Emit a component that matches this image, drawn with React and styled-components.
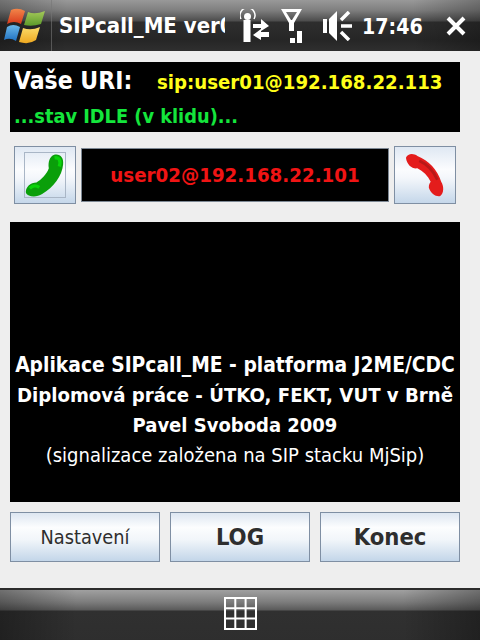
import React from 'react'
import styled, { createGlobalStyle } from 'styled-components'

const Global = createGlobalStyle`
  html, body { margin: 0; padding: 0; background: #eeeeee; }
  * { box-sizing: border-box; }
`

const Screen = styled.div`
  width: 480px;
  height: 640px;
  display: flex;
  flex-direction: column;
  overflow: hidden;
  background: #eeeeee;
  font-family: "DejaVu Sans Condensed", "DejaVu Sans", sans-serif;
`

const TitleBar = styled.div`
  height: 51px;
  display: flex;
  align-items: center;
  color: #fff;
  background:
    linear-gradient(90deg, rgba(0,0,0,.25), transparent 14%, transparent 86%, rgba(0,0,0,.25)),
    linear-gradient(#999 0, #808080 10px, #4c4c4c 21px, #2e2e2e 22px, #262626 40px, #2f2f2f 51px);
`

const LogoCell = styled.div`
  width: 52px;
  height: 51px;
  padding: 7px 0 0 4px;
  flex: none;
  border-right: 1px solid #77777799;
`

const AppTitle = styled.div`
  width: 166px;
  margin-left: 7px;
  overflow: hidden;
  white-space: nowrap;
  font-size: 22px;
  font-weight: bold;
`

const TrayItem = styled.div`
  display: flex;
  flex: none;
  margin-left: ${p => p.$left}px;
`

const Clock = styled.div`
  font-size: 21.2px;
  font-weight: bold;
  white-space: nowrap;
  margin-left: 10px;
  padding-top: 1px;
`

const Main = styled.div`
  flex: 1;
  padding: 11px 20px 0 10px;
  display: flex;
  flex-direction: column;
`

const UriPanel = styled.div`
  height: 70px;
  background: #000;
  padding: 4px 0 0 4px;
`

const UriRow = styled.div`
  display: flex;
  align-items: baseline;
  height: 39px;
`

const UriLabel = styled.div`
  width: 143px;
  color: #fff;
  font-size: 24.5px;
  font-weight: bold;
`

const UriValue = styled.div`
  color: #ffff1a;
  font-size: 20.2px;
  font-weight: bold;
  white-space: nowrap;
`

const Status = styled.div`
  color: #14e63c;
  font-size: 19.8px;
  font-weight: bold;
`

const CallRow = styled.div`
  display: flex;
  align-items: center;
  height: 58px;
  margin: 14px 4px 18px;
`

const PhoneButton = styled.div`
  width: 62px;
  height: 58px;
  flex: none;
  display: flex;
  align-items: center;
  justify-content: center;
  border: 1px solid #7f8fa3;
  background: linear-gradient(#dfe8f3 0, #fbfcfe 40%, #f4f7fb 55%, #c5d7ea 100%);
`

const IconFrame = styled.div`
  width: 42px;
  height: 46px;
  display: flex;
  align-items: center;
  justify-content: center;
  border: 1px solid ${p => (p.$framed ? '#a9b6c6' : 'transparent')};
`

const NumberField = styled.div`
  width: 308px;
  height: 54px;
  margin: 0 5px;
  flex: none;
  display: flex;
  align-items: center;
  justify-content: center;
  background: #000;
  border: 1px solid #7d8894;
  color: #f01414;
  font-size: 20.3px;
  font-weight: bold;
`

const InfoPanel = styled.div`
  height: 280px;
  background: #000;
  color: #fff;
  display: flex;
  flex-direction: column;
  justify-content: flex-end;
  align-items: center;
  padding-bottom: 32px;
`

const InfoLine = styled.div`
  height: 30px;
  line-height: 30px;
  white-space: nowrap;
  font-size: ${p => p.$size}px;
  font-weight: ${p => (p.$light ? 'normal' : 'bold')};
`

const ButtonRow = styled.div`
  display: flex;
  gap: 10px;
  margin-top: 10px;
`

const ActionButton = styled.div`
  width: ${p => p.$width}px;
  height: 50px;
  display: flex;
  align-items: center;
  justify-content: center;
  color: #2e2e2e;
  border: 1px solid #7f8fa3;
  background: linear-gradient(#dde6f1 0, #fcfdfe 30%, #f2f6fa 55%, #c3d6e9 100%);
  font-size: ${p => (p.$bold ? 23.6 : 19.8)}px;
  font-weight: ${p => (p.$bold ? 'bold' : 'normal')};
`

const SoftBar = styled.div`
  height: 52px;
  display: flex;
  justify-content: center;
  padding-top: 7px;
  border-top: 2px solid #2b2b2b;
  background:
    linear-gradient(90deg, rgba(0,0,0,.3), transparent 16%, transparent 84%, rgba(0,0,0,.3)),
    linear-gradient(#a0a0a0 0, #7d7d7d 12px, #5a5a5a 20px, #303030 21px, #2e2e2e 52px);
`

const WinLogo = () => (
  <svg width="42" height="40" viewBox="0 0 42 40">
    <defs>
      <linearGradient id="wr" x1="0" y1="0" x2="0" y2="1"><stop offset="0" stopColor="#f2864a" /><stop offset="1" stopColor="#d83a1c" /></linearGradient>
      <linearGradient id="wg" x1="0" y1="0" x2="0" y2="1"><stop offset="0" stopColor="#a5c95a" /><stop offset="1" stopColor="#5c9a2a" /></linearGradient>
      <linearGradient id="wb" x1="0" y1="0" x2="0" y2="1"><stop offset="0" stopColor="#6cb8ea" /><stop offset="1" stopColor="#1f70c0" /></linearGradient>
      <linearGradient id="wy" x1="0" y1="0" x2="0" y2="1"><stop offset="0" stopColor="#fbdc6a" /><stop offset="1" stopColor="#eea820" /></linearGradient>
    </defs>
    <path d="M7 3 Q14 0 21 4 L17 17 Q10 13 3 17 Z" fill="url(#wr)" />
    <path d="M24 5 Q31 8 41 4 L37 17 Q28 20 20 18 Z" fill="url(#wg)" />
    <path d="M3 20 Q9 16 16 20 L12 34 Q6 30 0 33 Z" fill="url(#wb)" />
    <path d="M19 21 Q27 24 36 20 L32 33 Q25 38 15 35 Z" fill="url(#wy)" />
  </svg>
)

const Antenna = () => (
  <svg width="30" height="33" viewBox="0 0 30 33" fill="#fff">
    <path d="M1 10 A7.5 7.5 0 1 1 14 10" fill="none" stroke="#fff" strokeWidth="1.5" />
    <circle cx="7.5" cy="7.5" r="3.5" />
    <rect x="3.5" y="11" width="7" height="22" />
    <path d="M13 15 H21 V10 L29 17 L21 22 V19 H13 Z" />
    <path d="M29 23 H21 V20 L13 26 L21 31 V28 H29 Z" />
  </svg>
)

const Signal = () => (
  <svg width="22" height="34" viewBox="0 0 22 34" fill="#fff">
    <path d="M0 0 H21 L13 14 V22 H8 V14 Z M5 3 L10 11 L11 11 L16 3 Z" fillRule="evenodd" />
    <rect x="9" y="29" width="5" height="5" />
    <rect x="16" y="22" width="5" height="12" />
  </svg>
)

const Speaker = () => (
  <svg width="29" height="30" viewBox="0 2 29 30" fill="#fff">
    <path d="M0 10 H4 V24 H0 Z M6 10 L14 2 V32 L6 24 Z" />
    <path d="M18 11 L26 3 M18 17 H29 M18 23 L26 31" stroke="#fff" strokeWidth="3.5" fill="none" />
  </svg>
)

const CloseIcon = () => (
  <svg width="20" height="20" viewBox="0 0 20 20">
    <path d="M2 2 L18 18 M18 2 L2 18" stroke="#fff" strokeWidth="4" />
  </svg>
)

const GreenPhone = () => (
  <svg width="42" height="46" viewBox="0 0 42 46">
    <path
      d="M30 2 C36 0 41 4 40 12 C39 24 30 36 18 43 C12 47 3 46 1 42 C0 36 6 31 12 31 C17 28 23 22 25 16 C24 9 26 4 30 2 Z"
      fill="#0a9f0a"
    />
    <path d="M31 5 C36 4 38 8 36 14 M5 37 C8 34 12 34 15 36" stroke="#0ad40a" strokeWidth="3.5" fill="none" />
  </svg>
)

const RedPhone = () => (
  <svg width="42" height="46" viewBox="0 0 42 46">
    <path
      d="M1 5 C3 0 9 0 13 3 C25 8 34 17 38 30 C41 35 41 42 37 45 C33 46 27 43 25 36 C25 33 26 31 27 30 C24 24 19 19 13 16 C8 17 2 13 1 5 Z"
      fill="#e41c1c"
    />
    <path d="M15 8 C24 12 30 19 34 28" stroke="#b81818" strokeWidth="3" fill="none" />
  </svg>
)

const GridIcon = () => (
  <svg width="33" height="33" viewBox="0 0 33 33" fill="none" stroke="#fff" strokeWidth="2">
    <rect x="1" y="1" width="31" height="31" />
    <path d="M1 11.3 H32 M1 21.6 H32 M11.3 1 V32 M21.6 1 V32" />
  </svg>
)

export default function App() {
  return (
    <Screen>
      <Global />
      <TitleBar>
        <LogoCell><WinLogo /></LogoCell>
        <AppTitle>SIPcall_ME ver0.9</AppTitle>
        <TrayItem $left={15}><Antenna /></TrayItem>
        <TrayItem $left={11}><Signal /></TrayItem>
        <TrayItem $left={20}><Speaker /></TrayItem>
        <Clock>17:46</Clock>
        <TrayItem $left={23}><CloseIcon /></TrayItem>
      </TitleBar>
      <Main>
        <UriPanel>
          <UriRow>
            <UriLabel>Vaše URI:</UriLabel>
            <UriValue>sip:user01@192.168.22.113</UriValue>
          </UriRow>
          <Status>...stav IDLE (v klidu)...</Status>
        </UriPanel>
        <CallRow>
          <PhoneButton><IconFrame $framed><GreenPhone /></IconFrame></PhoneButton>
          <NumberField>user02@192.168.22.101</NumberField>
          <PhoneButton><IconFrame><RedPhone /></IconFrame></PhoneButton>
        </CallRow>
        <InfoPanel>
          <InfoLine $size={20.8}>Aplikace SIPcall_ME - platforma J2ME/CDC</InfoLine>
          <InfoLine $size={20.2}>Diplomová práce - ÚTKO, FEKT, VUT v Brně</InfoLine>
          <InfoLine $size={20}>Pavel Svoboda 2009</InfoLine>
          <InfoLine $size={20} $light>(signalizace založena na SIP stacku MjSip)</InfoLine>
        </InfoPanel>
        <ButtonRow>
          <ActionButton $width={150}>Nastavení</ActionButton>
          <ActionButton $width={140} $bold>LOG</ActionButton>
          <ActionButton $width={140} $bold>Konec</ActionButton>
        </ButtonRow>
      </Main>
      <SoftBar><GridIcon /></SoftBar>
    </Screen>
  )
}
